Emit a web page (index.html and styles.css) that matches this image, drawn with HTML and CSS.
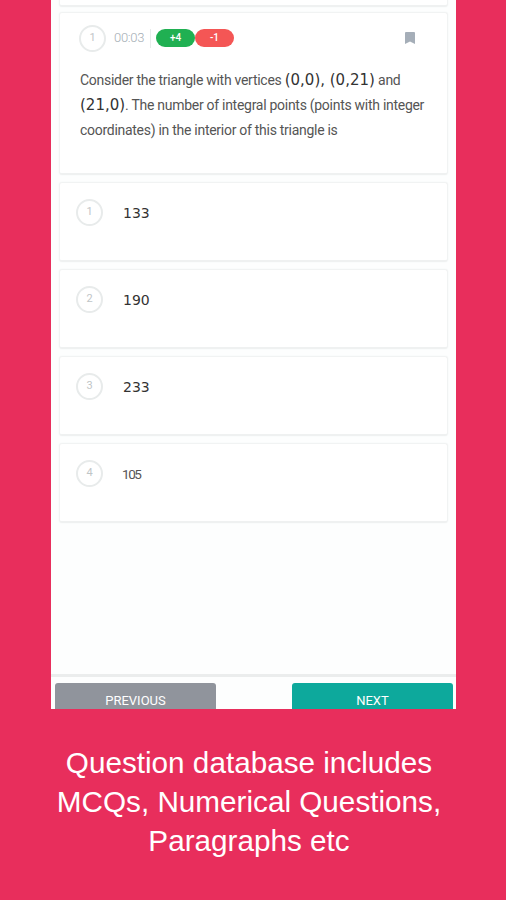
FILE: index.html
```
<!DOCTYPE html>
<html lang="en">
<head>
<meta charset="UTF-8" />
<meta name="viewport" content="width=device-width, initial-scale=1" />
<title>Question Database</title>
<link rel="stylesheet" href="styles.css">
</head>
<body>

<main class="phone">
  <div class="questions">
    <div class="card previous-card"></div>

    <section class="card question">
      <div class="question-header">
        <span class="circle">1</span>
        <span class="timer">00:03</span>
        <span class="mark positive">+4</span>
        <span class="mark negative">-1</span>
        <svg class="bookmark" viewBox="0 0 10 12"><path d="M1 0h8a1 1 0 0 1 1 1v11L5 9.5 0 12V1a1 1 0 0 1 1-1z"/></svg>
      </div>
      <p>
        <span class="line">Consider the triangle with vertices <span class="math">(0,0), (0,21)</span> and</span>
        <span class="line"><span class="math">(21,0)</span>. The number of integral points (points with integer</span>
        <span class="line">coordinates) in the interior of this triangle is</span>
      </p>
    </section>

    <div class="card option"><span class="circle">1</span><span class="math">133</span></div>
    <div class="card option"><span class="circle">2</span><span class="math">190</span></div>
    <div class="card option"><span class="circle">3</span><span class="math">233</span></div>
    <div class="card option"><span class="circle">4</span><span class="plain">105</span></div>
  </div>

  <footer class="actions">
    <button class="previous">PREVIOUS</button>
    <button class="next">NEXT</button>
  </footer>
</main>

<h1>Question database includes<br>MCQs, Numerical Questions,<br>Paragraphs etc</h1>

</body>
</html>
```
FILE: styles.css
```
* {
  box-sizing: border-box;
}
body {
  font-family: Roboto, sans-serif;
  background: #e82e5c;
  height: 900px;
  margin: 0;
  overflow: hidden;
  color: #555;
}
.phone {
  width: 405px;
  height: 709px;
  margin-left: 51px;
  background: #fdfefe;
  display: flex;
  flex-direction: column;
  overflow: hidden;
}
.questions {
  flex: 1;
  padding: 0 8px;
}
.card {
  background: #fff;
  border: 1px solid #f1f3f3;
  border-bottom: 2px solid #eff1f1;
  border-radius: 3px;
  box-shadow: 0 0 2px #f3f5f5;
}
.previous-card {
  height: 7px;
  border-top: 0;
  border-radius: 0 0 3px 3px;
}
.question {
  height: 163px;
  margin-top: 5px;
  padding: 11px 15px 0 19px;
}
.question-header {
  display: flex;
  align-items: center;
  height: 28px;
}
.circle {
  flex: none;
  width: 27px;
  height: 27px;
  border: 2px solid #e8ebeb;
  border-radius: 50%;
  font-size: 11px;
  line-height: 22px;
  text-align: center;
  color: #bfc5c7;
}
.timer {
  width: 37px;
  height: 19px;
  margin: 0 5px 0 8px;
  border-right: 1px solid #e8ebeb;
  font-size: 13px;
  font-weight: 300;
  line-height: 18px;
  letter-spacing: -0.3px;
  color: #a5aeb5;
}
.mark {
  width: 39px;
  height: 18px;
  border-radius: 9px;
  font-size: 10px;
  font-weight: 500;
  line-height: 18px;
  text-align: center;
  color: #fff;
}
.positive {
  background: #20b052;
}
.negative {
  background: #f45655;
}
.bookmark {
  width: 10px;
  height: 12px;
  margin: 0 17px 0 auto;
  fill: #a5aeb8;
}
p {
  margin: 16px 0 0 1px;
  font-size: 14px;
  line-height: 25px;
  letter-spacing: -0.28px;
}
.line {
  display: block;
  height: 25px;
  white-space: nowrap;
}
.math {
  font-family: "DejaVu Sans", sans-serif;
  font-size: 14px;
  letter-spacing: 0;
  color: #333;
}
.question .math {
  font-size: 15px;
}
.option {
  display: flex;
  height: 80px;
  margin-top: 7px;
  padding: 16px 16px 0;
}
.option .math,
.option .plain {
  margin-left: 20px;
  line-height: 29px;
}
.option .plain {
  margin-left: 19px;
  line-height: 28px;
}
.plain {
  font-size: 13.5px;
  letter-spacing: -1.4px;
}
.actions {
  display: flex;
  flex: none;
  justify-content: space-between;
  height: 35px;
  padding: 6px 3px 0 4px;
  border-top: 3px solid #ebeded;
}
button {
  width: 161px;
  height: 35px;
  padding: 0;
  border: 0;
  border-radius: 3px;
  font-family: Roboto, sans-serif;
  font-size: 13px;
  line-height: 35px;
  color: #fff;
}
.previous {
  background: #90949c;
}
.next {
  background: #0da99c;
}
h1 {
  margin: 34px 0 0;
  padding-right: 8px;
  font-family: "Liberation Sans", Arial, sans-serif;
  font-size: 29.7px;
  font-weight: 400;
  line-height: 39px;
  text-align: center;
  color: #fff;
}
```
